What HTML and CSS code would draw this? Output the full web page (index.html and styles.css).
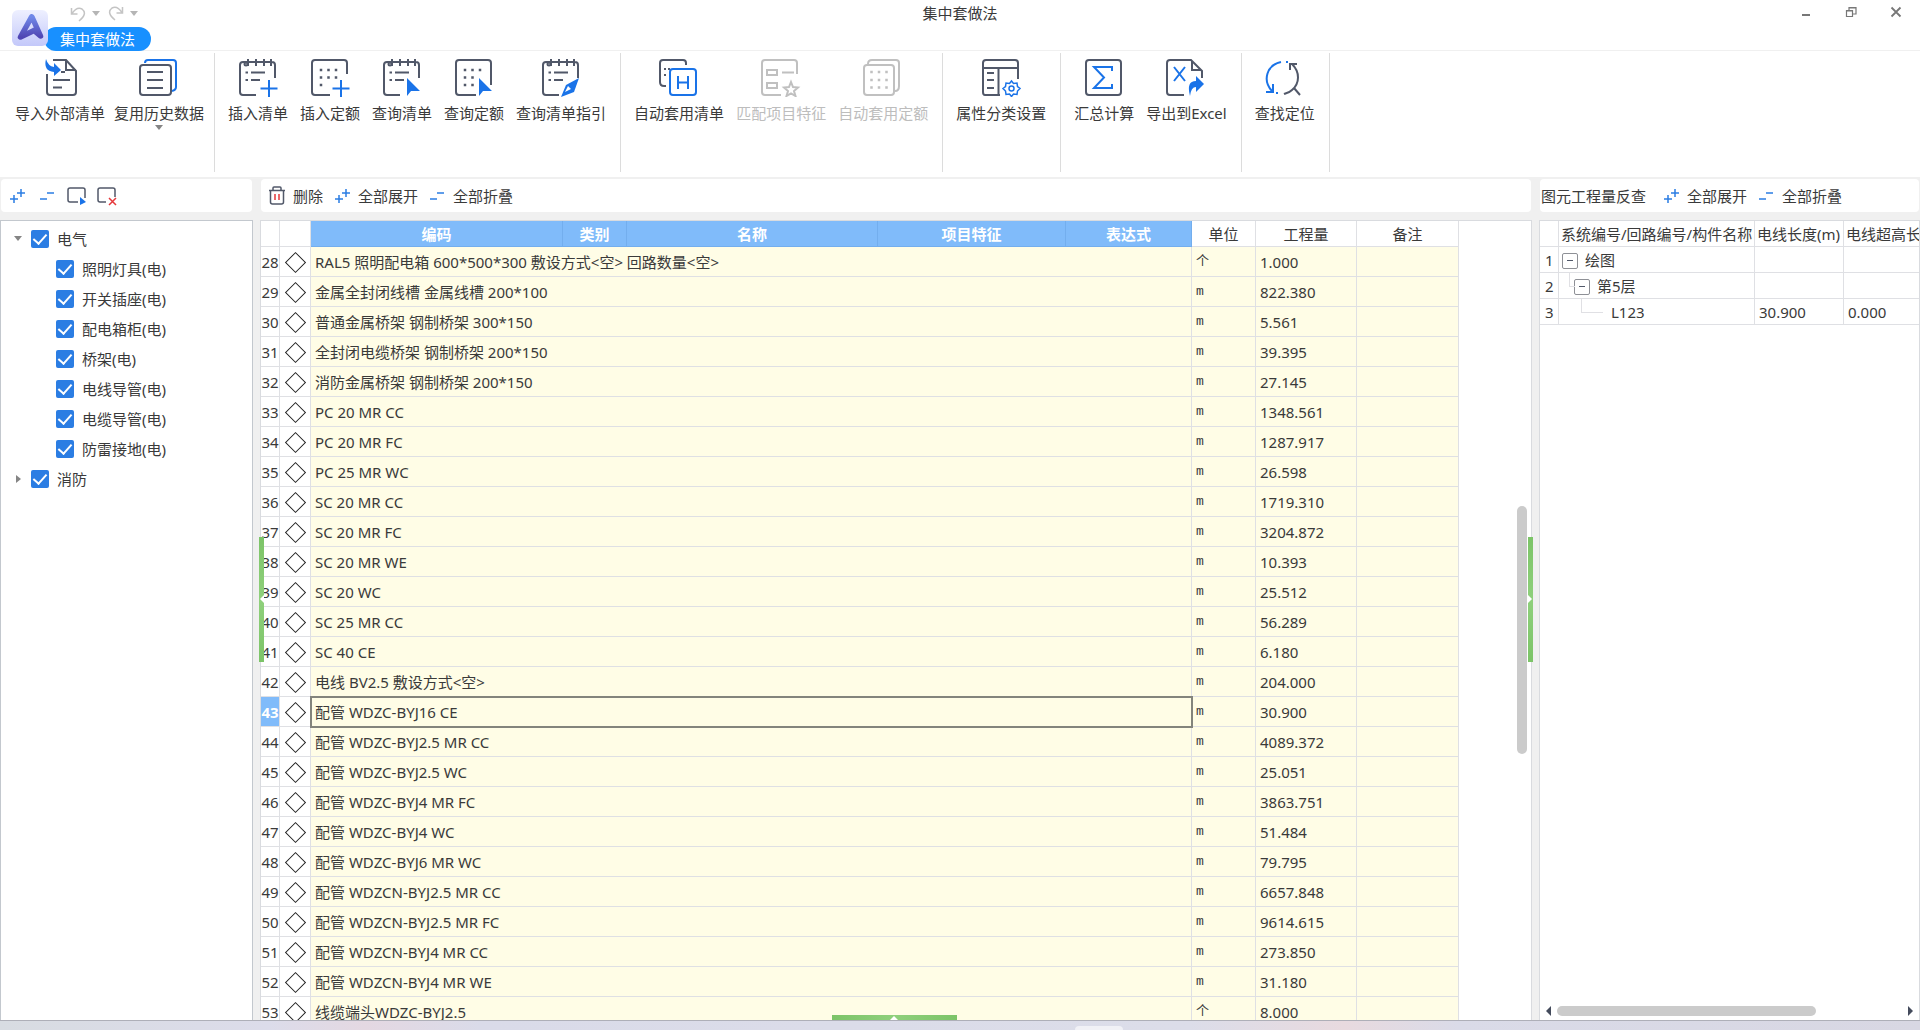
FILE: index.html
```html
<!DOCTYPE html>
<html lang="zh-CN">
<head>
  <meta charset="UTF-8" />
  <meta name="viewport" content="width=device-width, initial-scale=1.0"/>
  <title>集中套做法</title>
  <link rel="stylesheet" href="styles.css">
</head>
<body>
  <!-- shared symbols -->
  <svg class="defs" width="0" height="0">
    <symbol id="i-note" viewBox="0 0 40 40">
      <path d="M18 38H5q-3 0-3-3V8q0-3 3-3h29q3 0 3 3v13M10 2v7M18 2v7M26 2v7M33 2v7M13 15.500h14M13 23h9M7.500 15.500h2.500M7.500 23h2.500"/>
      <circle cx="8" cy="7" r="1.500"/>
    </symbol>
    <symbol id="i-expand" viewBox="0 0 16 16"><path d="M5 7v8M1 11h8M12 1v8M8 5h8"/></symbol>
    <symbol id="i-collapse" viewBox="0 0 16 16"><path d="M1 11h7M8 5h7"/></symbol>
    <symbol id="i-cursor" viewBox="0 0 40 40"><path d="M25 21v18l4-5h9z"/></symbol>
  </svg>

  <header class="titlebar">
    <div class="title-left">
      <svg class="logo" viewBox="0 0 36 36">
        <defs>
          <linearGradient id="lg1" x1="0" y1="0" x2="0" y2="1"><stop offset="0" stop-color="#eef0ff"/><stop offset="1" stop-color="#c3c8fa"/></linearGradient>
          <linearGradient id="lg2" x1="0" y1="0" x2="0" y2="1"><stop offset="0" stop-color="#7088e8"/><stop offset="1" stop-color="#5046b4"/></linearGradient>
        </defs>
        <rect width="36" height="36" rx="6" fill="url(#lg1)"/>
        <path d="M19.500 7L8.500 27L22 20.500M20 7L28.500 26L22 20.500" fill="none" stroke="url(#lg2)" stroke-width="5.500" stroke-linecap="round" stroke-linejoin="round"/>
      </svg>
      <div class="title-tools">
        <div class="quick">
          <button class="quick-btn" aria-label="撤销"><svg viewBox="0 0 16 16"><path d="M1.500 2v6h6M2 7.500C5 3 9 1.500 12 3c4 3 3 7-3 12"/></svg></button>
          <i class="caret"></i>
          <button class="quick-btn" aria-label="恢复"><svg viewBox="0 0 16 16"><path d="M14.500 1v6h-6M14 6.500C11 2 7 0.500 4 2c-4 3-3 7 3 12"/></svg></button>
          <i class="caret"></i>
        </div>
        <button class="tab">集中套做法</button>
      </div>
    </div>
    <h1>集中套做法</h1>
    <div class="win-btns">
      <button aria-label="最小化"><svg viewBox="0 0 12 12"><path d="M2 9h8" stroke-width="2"/></svg></button>
      <button aria-label="还原"><svg viewBox="0 0 12 12"><path d="M1.500 4.500h6v6h-6zM1 5h7M4 4V1.500h7V8H8M4 2h7" stroke-width="1.200"/></svg></button>
      <button aria-label="关闭"><svg viewBox="0 0 12 12"><path d="M1.500 1.500l9 9M10.500 1.500l-9 9" stroke-width="1.800"/></svg></button>
    </div>
  </header>

  <nav class="ribbon">
    <div class="group group-first">
      <button class="cmd">
        <svg viewBox="0 0 40 40"><path d="M7 17v18q0 3 3 3h23q3 0 3-3V14L26 3H13M26 3v10h10M21 15h4M13 23h17M13 30.500h9"/><path class="fill-b" d="M6 2q-3 12 8 13v4l7-6-7-7v4Q8 9 6 2z"/></svg>
        <span>导入外部清单</span>
      </button>
      <button class="cmd">
        <svg viewBox="0 0 40 40"><path class="b" d="M6 6q0-3 3-3h25q3 0 3 3v24q0 3-4 4"/><rect x="1" y="8" width="31" height="30" rx="3"/><path d="M8 15h16M8 23h16M8 31h16"/></svg>
        <span>复用历史数据</span>
        <i class="caret"></i>
      </button>
    </div>
    <div class="group">
      <button class="cmd">
        <svg viewBox="0 0 40 40"><use href="#i-note"/><path class="b" d="M31 23v17M22.500 31.500h17"/></svg>
        <span>插入清单</span>
      </button>
      <button class="cmd">
        <svg viewBox="0 0 40 40"><path d="M20 38H5q-3 0-3-3V6q0-3 3-3h29q3 0 3 3v11"/><path class="dots" d="M11 13h0M18.500 13h0M26 13h0M11 20.500h0M18.500 20.500h0M26 20.500h0M11 28h0"/><path class="b" d="M31 23v17M22.500 31.500h17"/></svg>
        <span>插入定额</span>
      </button>
      <button class="cmd">
        <svg viewBox="0 0 40 40"><use href="#i-note"/><use class="fill-b" href="#i-cursor"/></svg>
        <span>查询清单</span>
      </button>
      <button class="cmd">
        <svg viewBox="0 0 40 40"><path d="M22 38H5q-3 0-3-3V6q0-3 3-3h29q3 0 3 3v22"/><path class="dots" d="M11 13h0M18.500 13h0M26 13h0M11 20.500h0M18.500 20.500h0M11 28h0M18.500 28h0"/><use class="fill-b" href="#i-cursor"/></svg>
        <span>查询定额</span>
      </button>
      <button class="cmd">
        <svg viewBox="0 0 40 40"><use href="#i-note"/><path class="fill-b" d="M38 21L25 28L20 40L33 35z"/><path d="M24 35l3-6 3 3z" fill="#fff" stroke="none"/></svg>
        <span>查询清单指引</span>
      </button>
    </div>
    <div class="group">
      <button class="cmd">
        <svg viewBox="0 0 40 40"><path d="M7 29H5q-4 0-4-4V6q0-3 3-3h20q3 0 3 3v2M5 12h2M9 12h2M5 18h2"/><rect class="b" x="11" y="12" width="26" height="26" rx="3"/><path class="b" d="M19 19v13M29 19v13M19 25.500h10"/></svg>
        <span>自动套用清单</span>
      </button>
      <button class="cmd" disabled>
        <svg viewBox="0 0 40 40"><path d="M20 38H4q-3 0-3-3V6q0-3 3-3h29q3 0 3 3v11M6 13h10v5H6zM6 26h10v5H6zM21 15.500h12M30 25l2 5 5 .5-4 3.500 1.500 5-4.500-2.500-4.500 2.500 1.500-5-4-3.500 5-.5z"/></svg>
        <span>匹配项目特征</span>
      </button>
      <button class="cmd" disabled>
        <svg viewBox="0 0 40 40"><path d="M5 7q0-4 4-4h24q3 0 3 3v23q0 5-4 5"/><rect x="1" y="8" width="30" height="30" rx="3"/><path class="dots" d="M8.500 15h0M16 15h0M23.500 15h0M8.500 23h0M16 23h0M23.500 23h0M8.500 30.500h0M16 30.500h0M23.500 30.500h0"/></svg>
        <span>自动套用定额</span>
      </button>
    </div>
    <div class="group">
      <button class="cmd">
        <svg viewBox="0 0 40 40"><path d="M19 38H4q-2 0-2-3V6q0-3 3-3h29q3 0 3 3v16M2 11h35M17.500 11v27M6 16h7M6 23h7M6 31h7"/><path class="b thin" d="M30.500 24l2 2.500 3.500-.5.500 3.500 2.500 2-2.500 2.500-.5 3.500-3.500-.5-2 2.500-2-2.500-3.500.5-.5-3.500-2.500-2.500 2.500-2 .5-3.500 3.500.5z"/><circle class="b thin" cx="30.500" cy="31.500" r="2.500"/></svg>
        <span>属性分类设置</span>
      </button>
    </div>
    <div class="group">
      <button class="cmd">
        <svg viewBox="0 0 40 40"><rect x="2" y="3" width="35" height="35" rx="3"/><path class="b" d="M28 14v-4H10l10 10.500L10 31h18v-4"/></svg>
        <span>汇总计算</span>
      </button>
      <button class="cmd">
        <svg viewBox="0 0 40 40"><path d="M18 38H4q-3 0-3-3V6q0-3 3-3h21l11 11v7M26 4v9h9"/><path class="b" d="M8 10l11 14M19 10L8 24"/><path class="fill-b" d="M24 39q-4-15 6-15v-5l8 8-8 8v-5q-5 0-6 9z"/></svg>
        <span>导出到Excel</span>
      </button>
    </div>
    <div class="group">
      <button class="cmd">
        <svg viewBox="0 0 40 40"><path class="b" d="M16 5C2 8-3 23 7 34M8 27v8H1M21 5h2M11 36h2"/><path d="M27 7c8 8 8 19 0 26-3 3-6 3-8 4M25 13V7h7M29 31l6 7"/></svg>
        <span>查找定位</span>
      </button>
    </div>
  </nav>

  <main class="workspace">
    <aside class="side">
      <div class="bar bar-icons">
        <button aria-label="全部展开"><svg class="ico"><use href="#i-expand"/></svg></button>
        <button aria-label="全部折叠"><svg class="ico"><use href="#i-collapse"/></svg></button>
        <button aria-label="全选"><svg class="ico-box" viewBox="0 0 20 20"><path d="M11 16H3q-2 0-2-2V4q0-2 2-2h13q2 0 2 2v8"/><path class="fill-b" d="M13 11v8l6-3z"/></svg></button>
        <button aria-label="取消选择"><svg class="ico-box" viewBox="0 0 20 20"><path d="M9 16H3q-2 0-2-2V4q0-2 2-2h13q2 0 2 2v7"/><path class="red" d="M12 12l7 7M19 12l-7 7"/></svg></button>
      </div>
      <div class="panel">
        <ul class="tree">
          <li><i class="caret"></i><label><input type="checkbox" checked>电气</label>
            <ul>
              <li><label><input type="checkbox" checked>照明灯具(电)</label></li>
              <li><label><input type="checkbox" checked>开关插座(电)</label></li>
              <li><label><input type="checkbox" checked>配电箱柜(电)</label></li>
              <li><label><input type="checkbox" checked>桥架(电)</label></li>
              <li><label><input type="checkbox" checked>电线导管(电)</label></li>
              <li><label><input type="checkbox" checked>电缆导管(电)</label></li>
              <li><label><input type="checkbox" checked>防雷接地(电)</label></li>
            </ul>
          </li>
          <li><i class="caret caret-right"></i><label><input type="checkbox" checked>消防</label></li>
        </ul>
      </div>
    </aside>

    <section class="center">
      <div class="bar">
        <button><svg class="ico ico-del" viewBox="0 0 16 19"><path d="M0 4.500h16M4 4V2q0-1 1-1h6q1 0 1 1v2M1.500 5v11q0 2 2 2h9q2 0 2-2V5"/><path class="red" d="M6 8v6M10 8v6"/></svg>删除</button>
        <button><svg class="ico"><use href="#i-expand"/></svg>全部展开</button>
        <button><svg class="ico"><use href="#i-collapse"/></svg>全部折叠</button>
      </div>
      <div class="panel">
        <table class="grid main-grid">
          <colgroup>
            <col class="w-no"><col class="w-mark"><col class="w-code"><col class="w-kind"><col class="w-name">
            <col class="w-feat"><col class="w-expr"><col class="w-unit"><col class="w-qty"><col class="w-note">
          </colgroup>
          <thead>
            <tr><th></th><th></th><th class="on">编码</th><th class="on">类别</th><th class="on">名称</th><th class="on">项目特征</th><th class="on">表达式</th><th>单位</th><th>工程量</th><th>备注</th></tr>
          </thead>
          <tbody>
            <tr><th>28</th><td class="mark"></td><td colspan="5">RAL5 照明配电箱 600*500*300 敷设方式&lt;空&gt; 回路数量&lt;空&gt;</td><td class="unit">个</td><td>1.000</td><td></td></tr>
            <tr><th>29</th><td class="mark"></td><td colspan="5">金属全封闭线槽 金属线槽 200*100</td><td class="unit">m</td><td>822.380</td><td></td></tr>
            <tr><th>30</th><td class="mark"></td><td colspan="5">普通金属桥架 钢制桥架 300*150</td><td class="unit">m</td><td>5.561</td><td></td></tr>
            <tr><th>31</th><td class="mark"></td><td colspan="5">全封闭电缆桥架 钢制桥架 200*150</td><td class="unit">m</td><td>39.395</td><td></td></tr>
            <tr><th>32</th><td class="mark"></td><td colspan="5">消防金属桥架 钢制桥架 200*150</td><td class="unit">m</td><td>27.145</td><td></td></tr>
            <tr><th>33</th><td class="mark"></td><td colspan="5">PC 20 MR CC</td><td class="unit">m</td><td>1348.561</td><td></td></tr>
            <tr><th>34</th><td class="mark"></td><td colspan="5">PC 20 MR FC</td><td class="unit">m</td><td>1287.917</td><td></td></tr>
            <tr><th>35</th><td class="mark"></td><td colspan="5">PC 25 MR WC</td><td class="unit">m</td><td>26.598</td><td></td></tr>
            <tr><th>36</th><td class="mark"></td><td colspan="5">SC 20 MR CC</td><td class="unit">m</td><td>1719.310</td><td></td></tr>
            <tr><th>37</th><td class="mark"></td><td colspan="5">SC 20 MR FC</td><td class="unit">m</td><td>3204.872</td><td></td></tr>
            <tr><th>38</th><td class="mark"></td><td colspan="5">SC 20 MR WE</td><td class="unit">m</td><td>10.393</td><td></td></tr>
            <tr><th>39</th><td class="mark"></td><td colspan="5">SC 20 WC</td><td class="unit">m</td><td>25.512</td><td></td></tr>
            <tr><th>40</th><td class="mark"></td><td colspan="5">SC 25 MR CC</td><td class="unit">m</td><td>56.289</td><td></td></tr>
            <tr><th>41</th><td class="mark"></td><td colspan="5">SC 40 CE</td><td class="unit">m</td><td>6.180</td><td></td></tr>
            <tr><th>42</th><td class="mark"></td><td colspan="5">电线 BV2.5 敷设方式&lt;空&gt;</td><td class="unit">m</td><td>204.000</td><td></td></tr>
            <tr class="current"><th>43</th><td class="mark"></td><td colspan="5">配管 WDZC-BYJ16 CE</td><td class="unit">m</td><td>30.900</td><td></td></tr>
            <tr><th>44</th><td class="mark"></td><td colspan="5">配管 WDZC-BYJ2.5 MR CC</td><td class="unit">m</td><td>4089.372</td><td></td></tr>
            <tr><th>45</th><td class="mark"></td><td colspan="5">配管 WDZC-BYJ2.5 WC</td><td class="unit">m</td><td>25.051</td><td></td></tr>
            <tr><th>46</th><td class="mark"></td><td colspan="5">配管 WDZC-BYJ4 MR FC</td><td class="unit">m</td><td>3863.751</td><td></td></tr>
            <tr><th>47</th><td class="mark"></td><td colspan="5">配管 WDZC-BYJ4 WC</td><td class="unit">m</td><td>51.484</td><td></td></tr>
            <tr><th>48</th><td class="mark"></td><td colspan="5">配管 WDZC-BYJ6 MR WC</td><td class="unit">m</td><td>79.795</td><td></td></tr>
            <tr><th>49</th><td class="mark"></td><td colspan="5">配管 WDZCN-BYJ2.5 MR CC</td><td class="unit">m</td><td>6657.848</td><td></td></tr>
            <tr><th>50</th><td class="mark"></td><td colspan="5">配管 WDZCN-BYJ2.5 MR FC</td><td class="unit">m</td><td>9614.615</td><td></td></tr>
            <tr><th>51</th><td class="mark"></td><td colspan="5">配管 WDZCN-BYJ4 MR CC</td><td class="unit">m</td><td>273.850</td><td></td></tr>
            <tr><th>52</th><td class="mark"></td><td colspan="5">配管 WDZCN-BYJ4 MR WE</td><td class="unit">m</td><td>31.180</td><td></td></tr>
            <tr><th>53</th><td class="mark"></td><td colspan="5">线缆端头WDZC-BYJ2.5</td><td class="unit">个</td><td>8.000</td><td></td></tr>
          </tbody>
        </table>
        <div class="vscroll"></div>
      </div>
      <div class="grip grip-left"></div>
      <div class="grip grip-right"></div>
      <div class="grip grip-bottom"></div>
    </section>

    <section class="detail">
      <div class="bar bar-detail">
        <h2>图元工程量反查</h2>
        <button><svg class="ico"><use href="#i-expand"/></svg>全部展开</button>
        <button><svg class="ico"><use href="#i-collapse"/></svg>全部折叠</button>
      </div>
      <div class="panel">
        <table class="grid detail-grid">
          <colgroup><col class="w-no"><col class="w-path"><col class="w-len"><col class="w-over"></colgroup>
          <thead>
            <tr><th></th><th>系统编号/回路编号/构件名称</th><th>电线长度(m)</th><th>电线超高长度(m)</th></tr>
          </thead>
          <tbody>
            <tr><th>1</th><td class="lv1"><button class="fold" aria-label="折叠"></button>绘图</td><td></td><td></td></tr>
            <tr><th>2</th><td class="lv2"><button class="fold" aria-label="折叠"></button>第5层</td><td></td><td></td></tr>
            <tr><th>3</th><td class="lv3">L123</td><td>30.900</td><td>0.000</td></tr>
          </tbody>
        </table>
        <div class="hscroll"><i class="arrow-l"></i><div class="track"><div class="thumb"></div></div><i class="arrow-r"></i></div>
      </div>
    </section>
  </main>

  <footer class="desktop"><div class="dock"></div></footer>
</body>
</html>
```
FILE: styles.css
```css
* {
  box-sizing: border-box;
  margin: 0;
  padding: 0;
}

body {
  height: 100vh;
  display: flex;
  flex-direction: column;
  overflow: hidden;
  background: #fff;
  color: #3a3a3a;
  font: 15px/20px "Noto Sans", "Noto Sans CJK SC", sans-serif;
}

button {
  background: none;
  border: none;
  font: inherit;
  color: inherit;
  white-space: nowrap;
}

svg {
  display: block;
  fill: none;
  stroke: #515869;
  stroke-width: 2;
}

ul {
  list-style: none;
}

.defs {
  position: absolute;
}

.caret {
  border: 4px solid transparent;
  border-top: 5px solid #858585;
  border-bottom: none;
}

.caret-right {
  border: 4px solid transparent;
  border-left: 5px solid #858585;
  border-right: none;
}

/* title bar */
.titlebar {
  display: flex;
  height: 51px;
  border-bottom: 1px solid #f0f0f0;
}

.title-left {
  flex: 1;
  display: flex;
  padding-left: 12px;
}

.logo {
  width: 36px;
  height: 36px;
  margin-top: 10px;
  stroke: none;
  position: relative;
  z-index: 1;
}

.title-tools {
  margin-left: -4px;
}

.quick {
  display: flex;
  align-items: center;
  gap: 8px;
  height: 27px;
  padding-left: 26px;
}

.quick svg {
  width: 16px;
  height: 16px;
  stroke: #c4c4c4;
  stroke-width: 1.5;
}

.quick .caret {
  border-top-color: #b5b5b5;
}

.quick-btn + .caret {
  margin-left: -2px;
}

.tab {
  display: block;
  width: 107px;
  height: 24px;
  border-radius: 12px;
  background: #1890ff;
  color: #fff;
}

h1, h2 {
  font-size: 15px;
  font-weight: 400;
}

h1 {
  padding-top: 3px;
}

.win-btns {
  flex: 1;
  display: flex;
  justify-content: flex-end;
  align-items: flex-start;
  gap: 21px;
  padding: 6px 12px 0 0;
}

.win-btns button {
  padding: 0 6px;
}

.win-btns svg {
  width: 12px;
  height: 12px;
  stroke: #777;
}

/* ribbon */
.ribbon {
  display: flex;
  height: 126px;
  padding-top: 2px;
}

.group {
  display: flex;
  align-items: flex-start;
  gap: 12px;
  height: 119px;
  padding: 4px 14px 0 13px;
  border-right: 1px solid #dcdcdc;
}

.group-first {
  gap: 9px;
  padding: 4px 10px 0 15px;
}

.cmd {
  display: flex;
  flex-direction: column;
  align-items: center;
}

.cmd > svg {
  width: 40px;
  height: 40px;
  margin-bottom: 6px;
}

.cmd .caret {
  margin-top: 2px;
}

.cmd:disabled {
  color: #bdbdbd;
}

.cmd:disabled svg {
  stroke: #c0c0c0;
}

.b {
  stroke: #1a73e8;
}

.fill-b {
  fill: #1a73e8;
  stroke: none;
}

.red {
  stroke: #e5383b;
}

.thin {
  stroke-width: 1.5;
}

.dots {
  stroke-width: 2.5;
  stroke-linecap: square;
}

/* workspace */
.workspace {
  flex: 1;
  min-height: 0;
  display: flex;
  gap: 7px;
  padding-top: 2px;
  background: #f0f0f0;
}

.side, .center, .detail {
  display: flex;
  flex-direction: column;
  gap: 8px;
}

.side {
  width: 253px;
}

.center {
  flex: 1;
  min-width: 0;
  position: relative;
}

.detail {
  width: 381px;
}

.bar {
  display: flex;
  align-items: center;
  gap: 11px;
  height: 33px;
  margin: 0 1px;
  padding-left: 8px;
  background: #fff;
  border-radius: 4px;
}

.bar button {
  display: flex;
  align-items: center;
  gap: 8px;
}

.bar-icons {
  gap: 10px;
  padding-left: 6px;
}

.bar-icons button {
  width: 20px;
  justify-content: center;
}

.bar-detail {
  padding-left: 1px;
}

.bar-detail h2 {
  margin-right: 6px;
}

.ico {
  width: 16px;
  height: 16px;
  stroke: #2b7de3;
  stroke-width: 1.5;
}

.ico-del {
  height: 19px;
  stroke: #515869;
}

.ico-box {
  width: 20px;
  height: 20px;
  stroke-width: 1.5;
}

.panel {
  flex: 1;
  min-height: 0;
  position: relative;
  overflow: hidden;
  background: #fff;
  border: 1px solid #d9dbdf;
  border-bottom: none;
}

.side .panel {
  border-color: #c3c8ce;
}

/* tree */
.tree {
  padding-top: 3px;
}

.tree > li {
  position: relative;
}

.tree .caret {
  position: absolute;
  left: 13px;
  top: 12px;
}

.tree .caret-right {
  left: 15px;
  top: 11px;
}

.tree label {
  display: flex;
  align-items: center;
  gap: 8px;
  height: 30px;
  padding-left: 30px;
}

.tree ul label {
  padding-left: 55px;
}

.tree input {
  appearance: none;
  width: 18px;
  height: 18px;
  border-radius: 2px;
  background: #2b7de3;
  display: grid;
  place-items: center;
}

.tree input:checked::after {
  content: "";
  width: 6px;
  height: 11px;
  margin-bottom: 3px;
  border: solid #fff;
  border-width: 0 2px 2px 0;
  transform: rotate(42deg);
}

/* data grids */
.grid {
  table-layout: fixed;
  border-collapse: separate;
  border-spacing: 0;
}

.grid th, .grid td {
  height: 30px;
  border-right: 1px solid #dfe0e4;
  border-bottom: 1px solid #dfe0e4;
  font-weight: 400;
  text-align: left;
  white-space: nowrap;
  overflow: hidden;
}

.grid thead th {
  height: 26px;
  text-align: center;
}

.main-grid {
  width: 1198px;
}

.main-grid thead .on {
  background: #80bbfa;
  border-color: #73aeee;
  color: #fff;
  font-weight: 700;
}

.main-grid td {
  padding-left: 4px;
  background: #fffde6;
}

.main-grid tbody th {
  text-align: center;
}

.main-grid .mark {
  background: #fff;
  padding: 0;
}

.mark::before {
  content: "";
  display: block;
  width: 13px;
  height: 13px;
  margin: 1px auto 0;
  border: 1px solid #222;
  transform: rotate(45deg);
}

.grid .unit {
  font-family: "Liberation Mono", "Noto Sans CJK SC", monospace;
  font-size: 13px;
}

.grid .current th {
  background: #80bbfa;
  color: #fff;
  font-weight: 700;
}

.current td[colspan] {
  outline: 2px solid #83847c;
  outline-offset: -1px;
}

.w-no { width: 19px; }
.w-mark { width: 31px; }
.w-code { width: 252px; }
.w-kind { width: 64px; }
.w-name { width: 251px; }
.w-feat { width: 188px; }
.w-expr { width: 126px; }
.w-unit { width: 64px; }
.w-qty { width: 101px; }
.w-note { width: 102px; }
.w-path { width: 196px; }
.w-len { width: 89px; }
.w-over { width: 120px; }

.detail-grid {
  width: 424px;
}

.detail-grid th, .detail-grid td {
  height: 26px;
  padding-left: 4px;
  position: relative;
}

.detail-grid thead th {
  text-align: left;
  padding-left: 2px;
}

.detail-grid tbody th {
  padding-left: 5px;
}

.detail-grid .lv1 {
  padding-left: 3px;
}

.detail-grid .lv2 {
  padding-left: 15px;
}

.detail-grid .lv3 {
  padding-left: 52px;
}

.fold {
  width: 16px;
  height: 16px;
  margin-right: 7px;
  border: 1px solid #8e9096;
  border-radius: 2px;
  background: linear-gradient(#515869, #515869) center / 6px 1px no-repeat;
  vertical-align: -2px;
}

/* tree lines between levels */
.lv2::before, .lv3::before {
  content: "";
  position: absolute;
  left: 10px;
  top: 0;
  width: 5px;
  height: 13px;
  border: solid #e0e0e4;
  border-width: 0 0 1px 1px;
}

.lv3::before {
  left: 22px;
  width: 21px;
}

/* scrollbars */
.vscroll {
  position: absolute;
  right: 4px;
  top: 35.7%;
  width: 10px;
  height: 31%;
  border-radius: 5px;
  background: #cbcbcb;
}

.hscroll {
  position: absolute;
  left: 0;
  right: 0;
  bottom: 4px;
  display: flex;
  align-items: center;
  gap: 6px;
  padding: 0 6px;
}

.track {
  flex: 1;
}

.thumb {
  width: 75%;
  height: 10px;
  border-radius: 5px;
  background: #cbcbcb;
}

.arrow-l, .arrow-r {
  border: 5px solid transparent;
  border-right-color: #444b5c;
  border-left: none;
}

.arrow-r {
  border-left: 5px solid #444b5c;
  border-right: none;
}

/* splitter grips */
.grip {
  position: absolute;
  top: calc(50% - 63px);
  width: 5px;
  height: 125px;
  background: linear-gradient(#7cc468, #8fd07c, #7cc468);
}

.grip::after {
  content: "";
  position: absolute;
  top: 58px;
  left: 1px;
  border: 4px solid transparent;
  border-right-color: #fff;
  border-left: none;
}

.grip-left {
  left: -1px;
}

.grip-right {
  right: -1px;
}

.grip-right::after {
  left: 0;
  border-left: 4px solid #fff;
  border-right: none;
}

.grip-bottom {
  top: auto;
  bottom: 0;
  left: calc(50% - 62px);
  margin-left: -5%;
  width: 125px;
  height: 5px;
  left: 50%;
  background: linear-gradient(90deg, #7cc468, #8fd07c, #7cc468);
}

.grip-bottom::after {
  left: 58px;
  top: 1px;
  border: 4px solid transparent;
  border-bottom-color: #fff;
  border-top: none;
}

/* desktop strip under the window */
.desktop {
  height: 10px;
  border-top: 1px solid #aeafb8;
  padding-top: 5px;
  background: linear-gradient(90deg, #d8dce2, #dcdcea 14%, #e4d8e2 19%, #dadbe9 25%, #dcdde9 62%, #e8dadf 70%, #dadbe8 76%, #d8d7e3);
}

.dock {
  width: 48px;
  height: 4px;
  margin-left: 56%;
  border-radius: 4px 4px 0 0;
  background: #f1f1f6;
}
```
